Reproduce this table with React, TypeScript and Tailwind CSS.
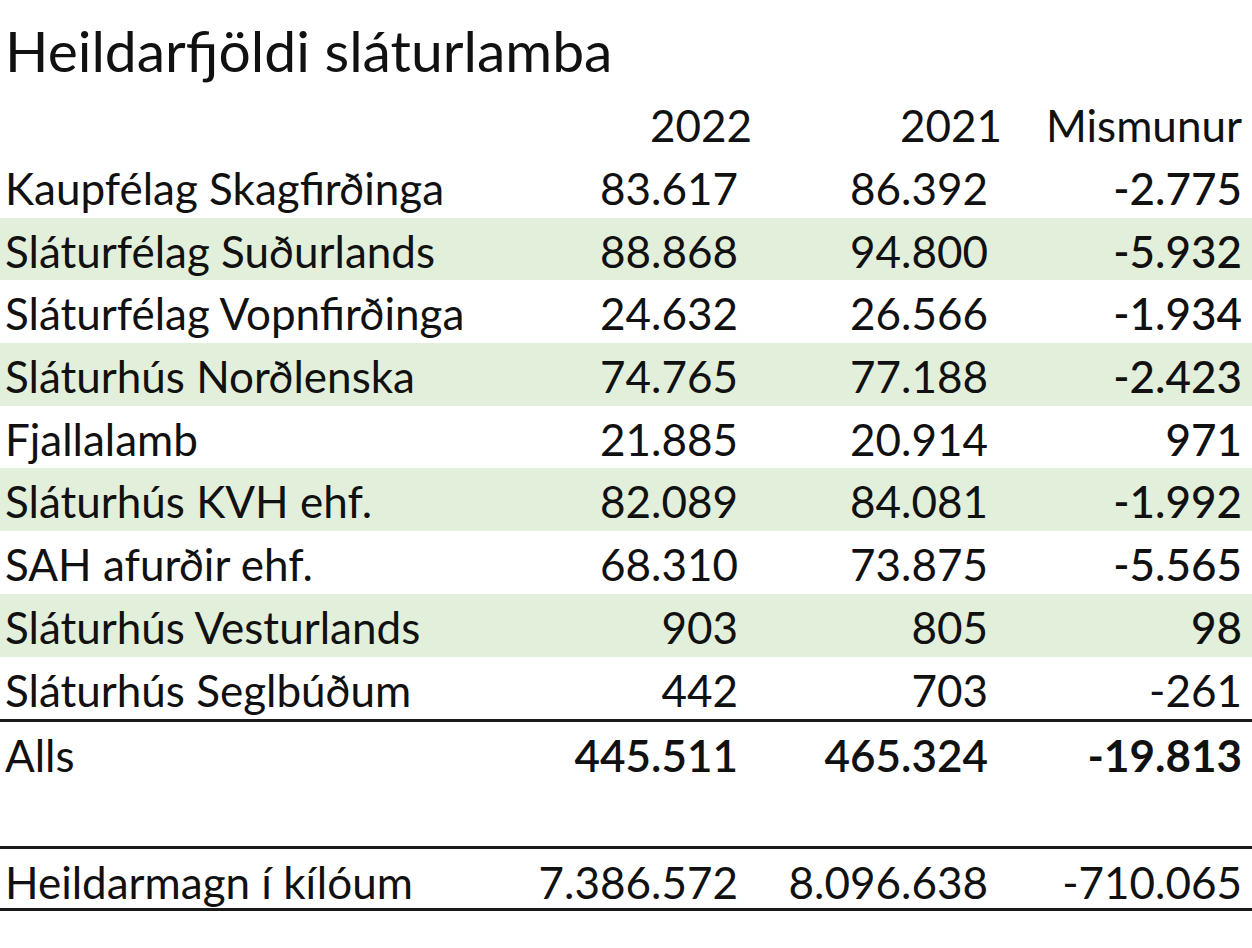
import React from 'react';

type Row = {
  name: string;
  y2022: string;
  y2021: string;
  diff: string;
  green?: boolean;
};

const rows: Row[] = [
  { name: 'Kaupfélag Skagfirðinga', y2022: '83.617', y2021: '86.392', diff: '-2.775' },
  { name: 'Sláturfélag Suðurlands', y2022: '88.868', y2021: '94.800', diff: '-5.932', green: true },
  { name: 'Sláturfélag Vopnfirðinga', y2022: '24.632', y2021: '26.566', diff: '-1.934' },
  { name: 'Sláturhús Norðlenska', y2022: '74.765', y2021: '77.188', diff: '-2.423', green: true },
  { name: 'Fjallalamb', y2022: '21.885', y2021: '20.914', diff: '971' },
  { name: 'Sláturhús KVH ehf.', y2022: '82.089', y2021: '84.081', diff: '-1.992', green: true },
  { name: 'SAH afurðir ehf.', y2022: '68.310', y2021: '73.875', diff: '-5.565' },
  { name: 'Sláturhús Vesturlands', y2022: '903', y2021: '805', diff: '98', green: true },
];

const grid = 'grid grid-cols-[497px_250px_250px_240px] items-center pl-[5px] pr-[10px] pb-[4px]';

export default function App() {
  return (
    <div
      className="w-[1252px] h-[948px] bg-white text-[#111] overflow-hidden"
      style={{ fontFamily: 'Lato, "Liberation Sans", sans-serif' }}
    >
      {/* titill */}
      <div className="h-[92px] flex items-end pb-[13px] pl-[5px] text-[57px] leading-none whitespace-nowrap">
        Heildarfjöldi sláturlamba
      </div>

      {/* haus */}
      <div className={`${grid} h-[63px] text-[44px]`}>
        <div />
        <div className="text-right">2022</div>
        <div className="text-right">2021</div>
        <div className="text-right">Mismunur</div>
      </div>

      {rows.map((r) => (
        <div key={r.name} className={`${grid} h-[62.7px] text-[44px] ${r.green ? 'bg-[#e2efda]' : ''}`}>
          <div className="whitespace-nowrap">{r.name}</div>
          <div className="text-right pr-[14px]">{r.y2022}</div>
          <div className="text-right pr-[14px]">{r.y2021}</div>
          <div className="text-right font-medium">{r.diff}</div>
        </div>
      ))}

      <div className={`${grid} h-[65px] text-[44px] border-b-[3px] border-[#1a1a1a]`}>
        <div className="whitespace-nowrap">Sláturhús Seglbúðum</div>
        <div className="text-right pr-[14px]">442</div>
        <div className="text-right pr-[14px]">703</div>
        <div className="text-right">-261</div>
      </div>

      <div className={`${grid} h-[63px] text-[44px]`}>
        <div>Alls</div>
        <div className="text-right pr-[14px] font-semibold">445.511</div>
        <div className="text-right pr-[14px] font-semibold">465.324</div>
        <div className="text-right font-bold">-19.813</div>
      </div>

      <div className="h-[64px] border-b-[3px] border-[#1a1a1a]" />

      <div className={`${grid} h-[62px] text-[44px] border-b-[3px] border-[#1a1a1a]`}>
        <div className="whitespace-nowrap">Heildarmagn í kílóum</div>
        <div className="text-right pr-[14px]">7.386.572</div>
        <div className="text-right pr-[14px]">8.096.638</div>
        <div className="text-right">-710.065</div>
      </div>
    </div>
  );
}
